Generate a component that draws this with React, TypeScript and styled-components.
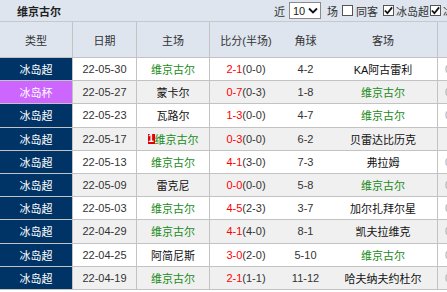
import React from 'react';
import styled, { createGlobalStyle } from 'styled-components';

const Global = createGlobalStyle`
  html, body {
    margin: 0;
    padding: 0;
    background: #ffffff;
    overflow: hidden;
  }
  body {
    font-family: "Liberation Sans", "Noto Sans CJK SC", sans-serif;
    font-size: 11px;
    color: #333;
  }
`;

const Panel = styled.div`
  width: 500px;
`;

const TitleBar = styled.div`
  height: 21px;
  display: flex;
  align-items: center;
  justify-content: space-between;
  background: #dee5ee;
  border-bottom: 1px solid #c4c9cf;
  padding-left: 17px;
`;

const Title = styled.span`
  font-weight: bold;
  color: #222;
`;

const Controls = styled.div`
  display: flex;
  align-items: center;
  width: 226px;
  height: 21px;
  color: #333;
`;

const Word = styled.span`
  margin: 0 ${(p: { gap?: number }) => p.gap ?? 0}px;
`;

const Select = styled.div`
  width: 32px;
  height: 17px;
  box-sizing: border-box;
  border: 1px solid #8a8a8a;
  background: #fff;
  display: flex;
  align-items: center;
  justify-content: space-between;
  padding: 0 2px 0 3px;
  margin: 0 6px 0 4px;
  color: #222;
`;

const Box = styled.span<{ $tight?: boolean }>`
  width: 11px;
  height: 11px;
  box-sizing: border-box;
  border: 1px solid #555;
  background: #fff;
  display: inline-flex;
  align-items: center;
  justify-content: center;
  margin: 0 2px 0 ${(p) => (p.$tight ? 1 : 4)}px;
`;

const Row = styled.div<{ $head?: boolean; $alt?: boolean }>`
  display: flex;
  height: ${(p) => (p.$head ? '36px' : '23.2px')};
  box-sizing: border-box;
  border-bottom: 1px solid #c3c3c3;
  background: ${(p) => (p.$head ? '#dee5ee' : p.$alt ? '#f0f0f0' : '#ffffff')};
`;

const Cell = styled.div<{ $w: number; $line?: boolean; $start?: boolean }>`
  width: ${(p) => p.$w}px;
  flex: none;
  box-sizing: border-box;
  display: flex;
  align-items: center;
  justify-content: ${(p) => (p.$start ? 'flex-start' : 'center')};
  border-right: ${(p) => (p.$line ? '1px solid #c3c3c3' : 'none')};
  white-space: nowrap;
  overflow: hidden;
`;

const TypeCell = styled(Cell)<{ $cup?: boolean }>`
  background: ${(p) => (p.$cup ? '#cc66ff' : '#003366')};
  color: #fff;
`;

const Team = styled.span<{ $self?: boolean }>`
  color: ${(p) => (p.$self ? '#1a8a1a' : '#111')};
  display: inline-flex;
  align-items: center;
`;

const Score = styled.span`
  color: #ff0000;
`;

const Rank = styled.span`
  background: #e00000;
  color: #fff;
  font-size: 10px;
  font-weight: bold;
  line-height: 10px;
  width: 7px;
  text-align: center;
`;

const Faint = styled.span`
  color: #aaa;
  padding-left: 7px;
`;

const cols = [73, 64, 73, 72, 47, 109, 60];

type Match = {
  cup?: boolean;
  date: string;
  home: string;
  score: string;
  half: string;
  corner: string;
  away: string;
  rank?: string;
};

const matches: Match[] = [
  { date: '22-05-30', home: '维京古尔', score: '2-1', half: '(0-0)', corner: '4-2', away: 'KA阿古雷利' },
  { cup: true, date: '22-05-27', home: '蒙卡尔', score: '0-7', half: '(0-3)', corner: '1-8', away: '维京古尔' },
  { date: '22-05-23', home: '瓦路尔', score: '1-3', half: '(0-0)', corner: '4-7', away: '维京古尔' },
  { date: '22-05-17', home: '维京古尔', score: '0-3', half: '(0-0)', corner: '6-2', away: '贝雷达比历克', rank: '1' },
  { date: '22-05-13', home: '维京古尔', score: '4-1', half: '(3-0)', corner: '7-3', away: '弗拉姆' },
  { date: '22-05-09', home: '雷克尼', score: '0-0', half: '(0-0)', corner: '5-8', away: '维京古尔' },
  { date: '22-05-03', home: '维京古尔', score: '4-5', half: '(2-3)', corner: '3-7', away: '加尔扎拜尔星' },
  { date: '22-04-29', home: '维京古尔', score: '4-1', half: '(4-0)', corner: '8-1', away: '凯夫拉维克' },
  { date: '22-04-25', home: '阿简尼斯', score: '3-0', half: '(2-0)', corner: '5-10', away: '维京古尔' },
  { date: '22-04-19', home: '维京古尔', score: '2-1', half: '(1-1)', corner: '11-12', away: '哈夫纳夫约杜尔' },
];

const Check = () => (
  <svg width="10" height="9" viewBox="0 0 10 9">
    <path d="M1 4.5 L3.8 7.5 L9 1" stroke="#111" strokeWidth="2" fill="none" />
  </svg>
);

const TeamName = ({ name, rank }: { name: string; rank?: string }) => (
  <Team $self={name === '维京古尔'}>
    {rank && <Rank>{rank}</Rank>}
    {name}
  </Team>
);

const App = () => (
  <Panel>
    <Global />
    <TitleBar>
      <Title>维京古尔</Title>
      <Controls>
        <Word>近</Word>
        <Select>
          <span>10</span>
          <svg width="10" height="7" viewBox="0 0 10 7">
            <path d="M1 1.5 L5 5.5 L9 1.5" stroke="#111" strokeWidth="1.8" fill="none" />
          </svg>
        </Select>
        <Word>场</Word>
        <Box />
        <Word gap={1}>同客</Word>
        <Box><Check /></Box>
        <Word>冰岛超</Word>
        <Box $tight><Check /></Box>
        <Word>冰岛杯</Word>
      </Controls>
    </TitleBar>
    <Row $head>
      <Cell $w={cols[0]} $line>类型</Cell>
      <Cell $w={cols[1]} $line>日期</Cell>
      <Cell $w={cols[2]} $line>主场</Cell>
      <Cell $w={cols[3]}>比分(半场)</Cell>
      <Cell $w={cols[4]}>角球</Cell>
      <Cell $w={cols[5]} $line>客场</Cell>
      <Cell $w={cols[6]} />
    </Row>
    {matches.map((m, i) => (
      <Row key={m.date} $alt={i % 2 === 1}>
        <TypeCell $w={cols[0]} $line $cup={m.cup}>{m.cup ? '冰岛杯' : '冰岛超'}</TypeCell>
        <Cell $w={cols[1]} $line>{m.date}</Cell>
        <Cell $w={cols[2]} $line><TeamName name={m.home} rank={m.rank} /></Cell>
        <Cell $w={cols[3]}>
          <Score>{m.score}</Score>
          {m.half}
        </Cell>
        <Cell $w={cols[4]}>{m.corner}</Cell>
        <Cell $w={cols[5]} $line><TeamName name={m.away} /></Cell>
        <Cell $w={cols[6]} $start>
          <Faint>{i === 3 ? '' : '0'}</Faint>
        </Cell>
      </Row>
    ))}
  </Panel>
);

export default App;
